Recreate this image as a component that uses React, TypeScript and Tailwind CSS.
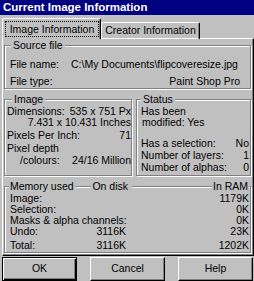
const line =
  "mt-[6px] h-[2px] border-t border-b border-t-[#808080] border-b-white";

function Group({
  title,
  className,
  legendClass,
  children,
}: {
  title: React.ReactNode;
  className: string;
  legendClass: string;
  children: React.ReactNode;
}) {
  return (
    <fieldset
      className={`min-w-0 border border-[#808080] shadow-[inset_1px_1px_0_#fff,1px_1px_0_#fff] ${className}`}
    >
      <legend className={`bg-[#c0c0c0] leading-[13px] ${legendClass}`}>
        {title}
      </legend>
      {children}
    </fieldset>
  );
}

function Button({ label, isDefault }: { label: string; isDefault?: boolean }) {
  return (
    <button
      type="button"
      className={`h-[24px] w-[75px] bg-[#c0c0c0] ${
        isDefault
          ? "border border-black shadow-[inset_1px_1px_0_#fff,inset_-1px_-1px_0_#000,inset_-2px_-2px_0_#808080]"
          : "border border-t-white border-l-white border-r-black border-b-black shadow-[inset_-1px_-1px_0_#808080]"
      }`}
    >
      {label}
    </button>
  );
}

export default function App() {
  const memory = [
    { label: "Image:", disk: "", ram: "1179K" },
    { label: "Selection:", disk: "", ram: "0K" },
    { label: "Masks & alpha channels:", disk: "", ram: "0K" },
    { label: "Undo:", disk: "3116K", ram: "23K" },
  ];

  return (
    <div className="h-[281px] w-[254px] overflow-hidden bg-[#c0c0c0] font-['Liberation_Sans',Arial,sans-serif] text-[10.5px] text-black">
      {/* Title bar */}
      <div className="h-[15px] bg-[#000080] pl-[3px] text-[11.5px] font-bold leading-[15px] text-white">
        Current Image Information
      </div>

      {/* Tabs */}
      <div className="mt-[3px] flex h-[21px] items-end pl-[2px]">
        <div className="relative z-10 h-[21px] w-[99px] rounded-t-[2px] border-t border-l border-r border-t-white border-l-white border-r-black bg-[#c0c0c0] pt-[2px] pl-[2px] shadow-[inset_-1px_0_0_#808080]">
          <div className="h-[16px] w-[94px] border border-dotted border-black text-center leading-[14px]">
            Image Information
          </div>
        </div>
        <div className="h-[17px] w-[99px] rounded-t-[2px] border-t border-l border-r border-t-white border-l-white border-r-black text-center leading-[15px] shadow-[inset_-1px_0_0_#808080]">
          Creator Information
        </div>
      </div>

      {/* Tab panel */}
      <div className="-mt-px ml-[2px] w-[252px] border border-t-white border-l-white border-r-black border-b-black pl-[1px] pr-[2px] pb-[2px] shadow-[inset_-1px_-1px_0_#808080]">
        <Group
          title="Source file"
          className="pl-[5px] pr-[10px] pt-[6px]"
          legendClass="ml-px px-[2px]"
        >
          <div className="flex leading-[13px]">
            <span className="w-[61px] shrink-0">File name:</span>
            <span className="whitespace-nowrap">
              {"C:\\My Documents\\flipcoveresize.jpg"}
            </span>
          </div>
          <div className="mt-[4px] flex justify-between leading-[13px]">
            <span>File type:</span>
            <span>Paint Shop Pro</span>
          </div>
        </Group>

        <div className="mt-[4px] flex gap-[4px]">
          <Group
            title="Image"
            className="w-[128px] shrink-0 pl-[2px] pb-[9px]"
            legendClass="ml-[5px] px-[2px]"
          >
            <div className="flex justify-between whitespace-nowrap leading-[11px]">
              <span>Dimensions:</span>
              <span>535 x 751 Px</span>
            </div>
            <div className="text-right whitespace-nowrap leading-[10px]">
              7.431 x 10.431 Inches
            </div>
            <div className="mt-[3px] flex justify-between leading-[11px]">
              <span>Pixels Per Inch:</span>
              <span>71</span>
            </div>
            <div className="mt-[2px] leading-[11px]">Pixel depth</div>
            <div className="mt-px flex justify-between whitespace-nowrap pl-[13px] leading-[11px]">
              <span>/colours:</span>
              <span>24/16 Million</span>
            </div>
          </Group>

          <Group
            title="Status"
            className="flex-1 pl-[4px] pr-[1px]"
            legendClass="px-[2px]"
          >
            <div className="leading-[11px]">Has been</div>
            <div className="pl-px leading-[11px]">modified: Yes</div>
            <div className="mt-[9px] flex justify-between leading-[12px]">
              <span>Has a selection:</span>
              <span>No</span>
            </div>
            <div className="flex justify-between leading-[12px]">
              <span>Number of layers:</span>
              <span>1</span>
            </div>
            <div className="flex justify-between leading-[12px]">
              <span>Number of alphas:</span>
              <span>0</span>
            </div>
          </Group>
        </div>

        <Group
          className="mt-[4px] pl-[5px] pr-[1px] pb-px"
          legendClass="-ml-px flex w-[240px]"
          title={
            <>
              <div className="flex w-[119px]">
                <span className="px-px">Memory used</span>
                <span className={`flex-1 ${line}`} />
                <span className="pl-px">On disk</span>
              </div>
              <span className={`ml-[4px] mr-px flex-1 ${line}`} />
              <span className="pr-px">In RAM</span>
            </>
          }
        >
          {memory.map((row) => (
            <div key={row.label} className="flex leading-[11px]">
              <span className="w-[82px] shrink-0 whitespace-nowrap">
                {row.label}
              </span>
              <span className="w-[34px] shrink-0 text-right">{row.disk}</span>
              <span className="flex-1 text-right">{row.ram}</span>
            </div>
          ))}
          <div className="mt-[3px] flex leading-[11px]">
            <span className="w-[82px] shrink-0">Total:</span>
            <span className="w-[34px] shrink-0 text-right">3116K</span>
            <span className="flex-1 text-right">1202K</span>
          </div>
        </Group>
      </div>

      {/* Buttons */}
      <div className="mt-px ml-[2px] flex gap-[13px]">
        <Button label="OK" isDefault />
        <Button label="Cancel" />
        <Button label="Help" />
      </div>
    </div>
  );
}
